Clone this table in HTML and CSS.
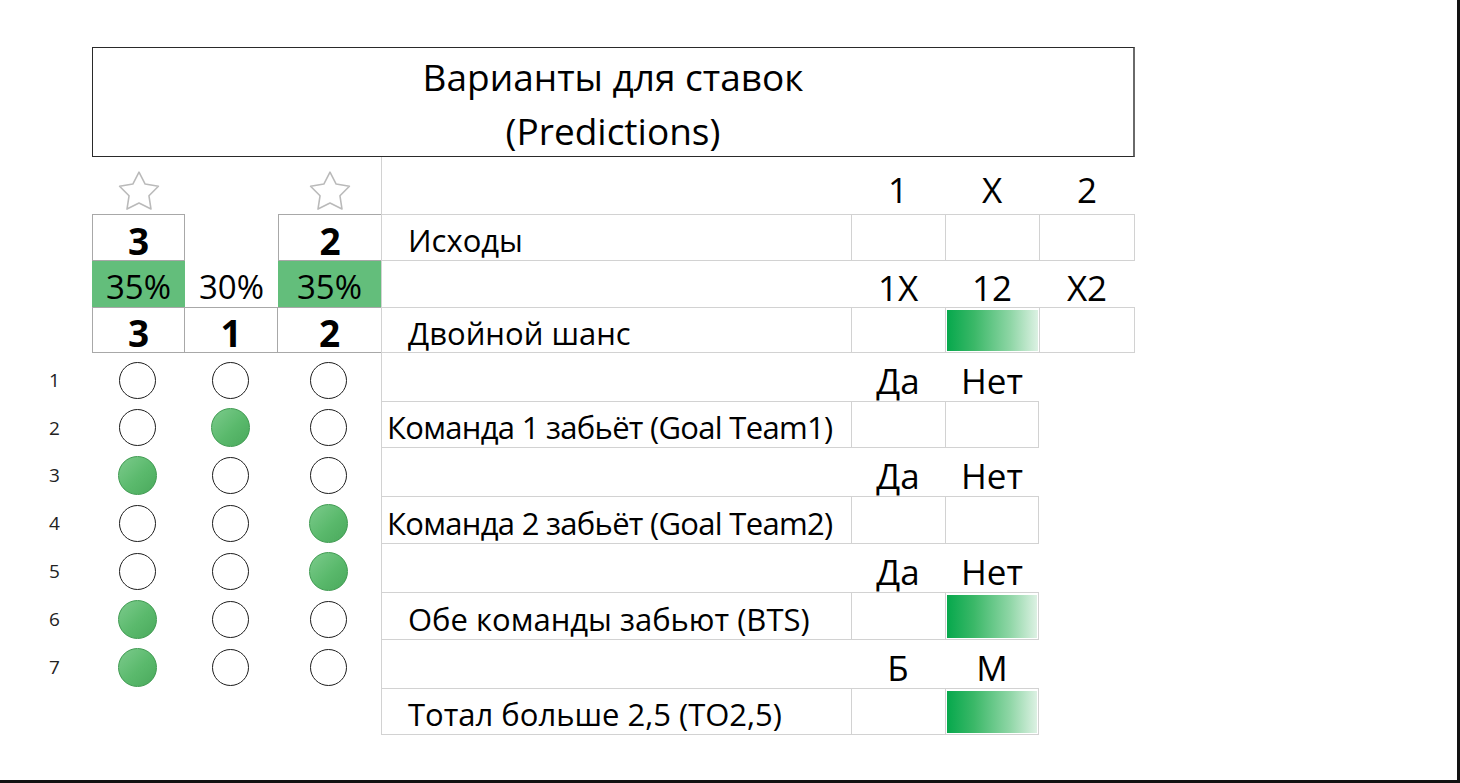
FILE: index.html
```html
<!DOCTYPE html>
<html lang="ru">
<head>
<meta charset="utf-8">
<title>Варианты для ставок</title>
<link rel="stylesheet" href="styles.css">
</head>
<body>
<div class="page">
  <div class="sheet">
    <!-- title -->
    <div class="blank"></div>
    <div class="title">Варианты для ставок<br>(Predictions)</div>

    <!-- r0 -->
    <div class="blank"></div>
    <div class="star-cell"><svg class="star" viewBox="0 0 42 42" width="44" height="44"><path d="M21 2 L26.88 13.41 L39.55 15.47 L30.51 24.59 L32.46 37.28 L21 31.5 L9.54 37.28 L11.49 24.59 L2.45 15.47 L15.12 13.41 Z"/></svg></div>
    <div class="blank"></div>
    <div class="star-cell"><svg class="star" viewBox="0 0 42 42" width="44" height="44"><path d="M21 2 L26.88 13.41 L39.55 15.47 L30.51 24.59 L32.46 37.28 L21 31.5 L9.54 37.28 L11.49 24.59 L2.45 15.47 L15.12 13.41 Z"/></svg></div>
    <div class="lab"></div>
    <div class="hd">1</div>
    <div class="hd">X</div>
    <div class="hd">2</div>

    <!-- r1 -->
    <div class="blank"></div>
    <div class="box full bold">3</div>
    <div class="blank"></div>
    <div class="box first bold">2</div>
    <div class="lab boxed">Исходы</div>
    <div class="val"></div>
    <div class="val"></div>
    <div class="val last"></div>

    <!-- r2 -->
    <div class="blank"></div>
    <div class="pct green">35%</div>
    <div class="pct">30%</div>
    <div class="pct green">35%</div>
    <div class="lab"></div>
    <div class="hd">1X</div>
    <div class="hd">12</div>
    <div class="hd">X2</div>

    <!-- r3 -->
    <div class="blank"></div>
    <div class="box full bold">3</div>
    <div class="box mid bold">1</div>
    <div class="box tail bold">2</div>
    <div class="lab boxed">Двойной шанс</div>
    <div class="val"></div>
    <div class="val"><div class="bar"></div></div>
    <div class="val last"></div>

    <!-- r4 -->
    <div class="num">1</div>
    <div class="dot-cell"><span class="dot"></span></div>
    <div class="dot-cell"><span class="dot"></span></div>
    <div class="dot-cell"><span class="dot"></span></div>
    <div class="lab"></div>
    <div class="hd">Да</div>
    <div class="hd">Нет</div>
    <div class="blank"></div>

    <!-- r5 -->
    <div class="num">2</div>
    <div class="dot-cell"><span class="dot"></span></div>
    <div class="dot-cell"><span class="dot on"></span></div>
    <div class="dot-cell"><span class="dot"></span></div>
    <div class="lab boxed tight">Команда 1 забьёт (Goal Team1)</div>
    <div class="val"></div>
    <div class="val last"></div>
    <div class="blank"></div>

    <!-- r6 -->
    <div class="num">3</div>
    <div class="dot-cell"><span class="dot on"></span></div>
    <div class="dot-cell"><span class="dot"></span></div>
    <div class="dot-cell"><span class="dot"></span></div>
    <div class="lab"></div>
    <div class="hd">Да</div>
    <div class="hd">Нет</div>
    <div class="blank"></div>

    <!-- r7 -->
    <div class="num">4</div>
    <div class="dot-cell"><span class="dot"></span></div>
    <div class="dot-cell"><span class="dot"></span></div>
    <div class="dot-cell"><span class="dot on"></span></div>
    <div class="lab boxed tight">Команда 2 забьёт (Goal Team2)</div>
    <div class="val"></div>
    <div class="val last"></div>
    <div class="blank"></div>

    <!-- r8 -->
    <div class="num">5</div>
    <div class="dot-cell"><span class="dot"></span></div>
    <div class="dot-cell"><span class="dot"></span></div>
    <div class="dot-cell"><span class="dot on"></span></div>
    <div class="lab"></div>
    <div class="hd">Да</div>
    <div class="hd">Нет</div>
    <div class="blank"></div>

    <!-- r9 -->
    <div class="num">6</div>
    <div class="dot-cell"><span class="dot on"></span></div>
    <div class="dot-cell"><span class="dot"></span></div>
    <div class="dot-cell"><span class="dot"></span></div>
    <div class="lab boxed">Обе команды забьют (BTS)</div>
    <div class="val"></div>
    <div class="val last"><div class="bar"></div></div>
    <div class="blank"></div>

    <!-- r10 -->
    <div class="num">7</div>
    <div class="dot-cell"><span class="dot on"></span></div>
    <div class="dot-cell"><span class="dot"></span></div>
    <div class="dot-cell"><span class="dot"></span></div>
    <div class="lab"></div>
    <div class="hd">Б</div>
    <div class="hd">М</div>
    <div class="blank"></div>

    <!-- r11 -->
    <div class="blank"></div>
    <div class="blank"></div>
    <div class="blank"></div>
    <div class="blank"></div>
    <div class="lab boxed">Тотал больше 2,5 (ТО2,5)</div>
    <div class="val"></div>
    <div class="val last"><div class="bar"></div></div>
    <div class="blank"></div>
  </div>
</div>
</body>
</html>
```

FILE: styles.css
```css
* { box-sizing: border-box; }

html, body {
  margin: 0;
  padding: 0;
  background: #fff;
}

body {
  font-family: "Open Sans", "Noto Sans", sans-serif;
  color: #000;
}

.page {
  width: 1460px;
  height: 783px;
  padding-top: 47px;
  background: #fff;
  border-right: 3px solid #111;
  border-bottom: 3px solid #111;
}

.sheet {
  display: grid;
  grid-template-columns: 92px 93px 93px 103px 470px 94px 94px 96px;
  grid-template-rows: 110px 57px 47px 46px 46px 48px 47px 48px 48px 48px 48px 48px 47px;
}

.title {
  grid-column: 2 / 9;
  border: 1px solid #2a2a2a;
  border-right: 2px solid #6a6a6a;
  text-align: center;
  font-size: 37px;
  line-height: 54px;
  padding-top: 2px;
}

.star-cell {
  display: flex;
  justify-content: center;
  align-items: flex-start;
  padding-top: 13px;
}

.star path {
  fill: #fff;
  stroke: #bababa;
  stroke-width: 1.5;
  stroke-linejoin: round;
}

/* left summary boxes */
.box {
  display: flex;
  justify-content: center;
  align-items: center;
  padding-top: 5px;
  border-color: #a8a8a8;
  border-style: solid;
  border-width: 0;
}
.box.full { border-width: 1px; }
.box.first { border-width: 1px 0 1px 1px; }
.box.mid { border-width: 1px 1px 1px 0; }
.box.tail { border-width: 1px 0 1px 0; }

.bold {
  font-weight: 700;
  font-size: 37px;
}

.pct {
  display: flex;
  justify-content: center;
  align-items: center;
  padding-top: 5px;
  font-size: 33px;
}
.pct.green { background: #63be7b; }

/* right table */
.lab {
  border-left: 1px solid #d2d2d2;
  display: flex;
  align-items: center;
  padding-left: 26px;
  padding-top: 5px;
  font-size: 31px;
  white-space: nowrap;
}
.lab.boxed {
  border-top: 1px solid #d2d2d2;
  border-bottom: 1px solid #d2d2d2;
}
.lab.tight {
  padding-left: 5px;
  letter-spacing: -0.7px;
}

.hd {
  display: flex;
  justify-content: center;
  align-items: center;
  padding-top: 7px;
  font-size: 35px;
}

.val {
  border: 1px solid #d2d2d2;
  border-right: 0;
  display: flex;
  padding: 2px 1px 1px 1px;
}
.val.last { border-right: 1px solid #d2d2d2; }

.bar {
  flex: 1;
  background: linear-gradient(to right, #06a84c 0%, #3bb868 30%, #8fd6a6 70%, #dcf1e3 100%);
}

/* circles */
.num {
  display: flex;
  align-items: center;
  padding-left: 49px;
  padding-top: 6px;
  font-size: 19px;
  color: #222;
}

.dot-cell {
  display: flex;
  justify-content: center;
  align-items: center;
  padding-top: 6px;
  padding-right: 3px;
}

.dot {
  display: block;
  width: 37px;
  height: 37px;
  border-radius: 50%;
  border: 1.6px solid #1d1d1d;
  background: #fff;
}
.dot.on {
  width: 39px;
  height: 39px;
  border: 1px solid #3e9a50;
  background: linear-gradient(135deg, #7ccb8c 0%, #5ab96c 55%, #4aa95c 100%);
}

.blank { }
```
